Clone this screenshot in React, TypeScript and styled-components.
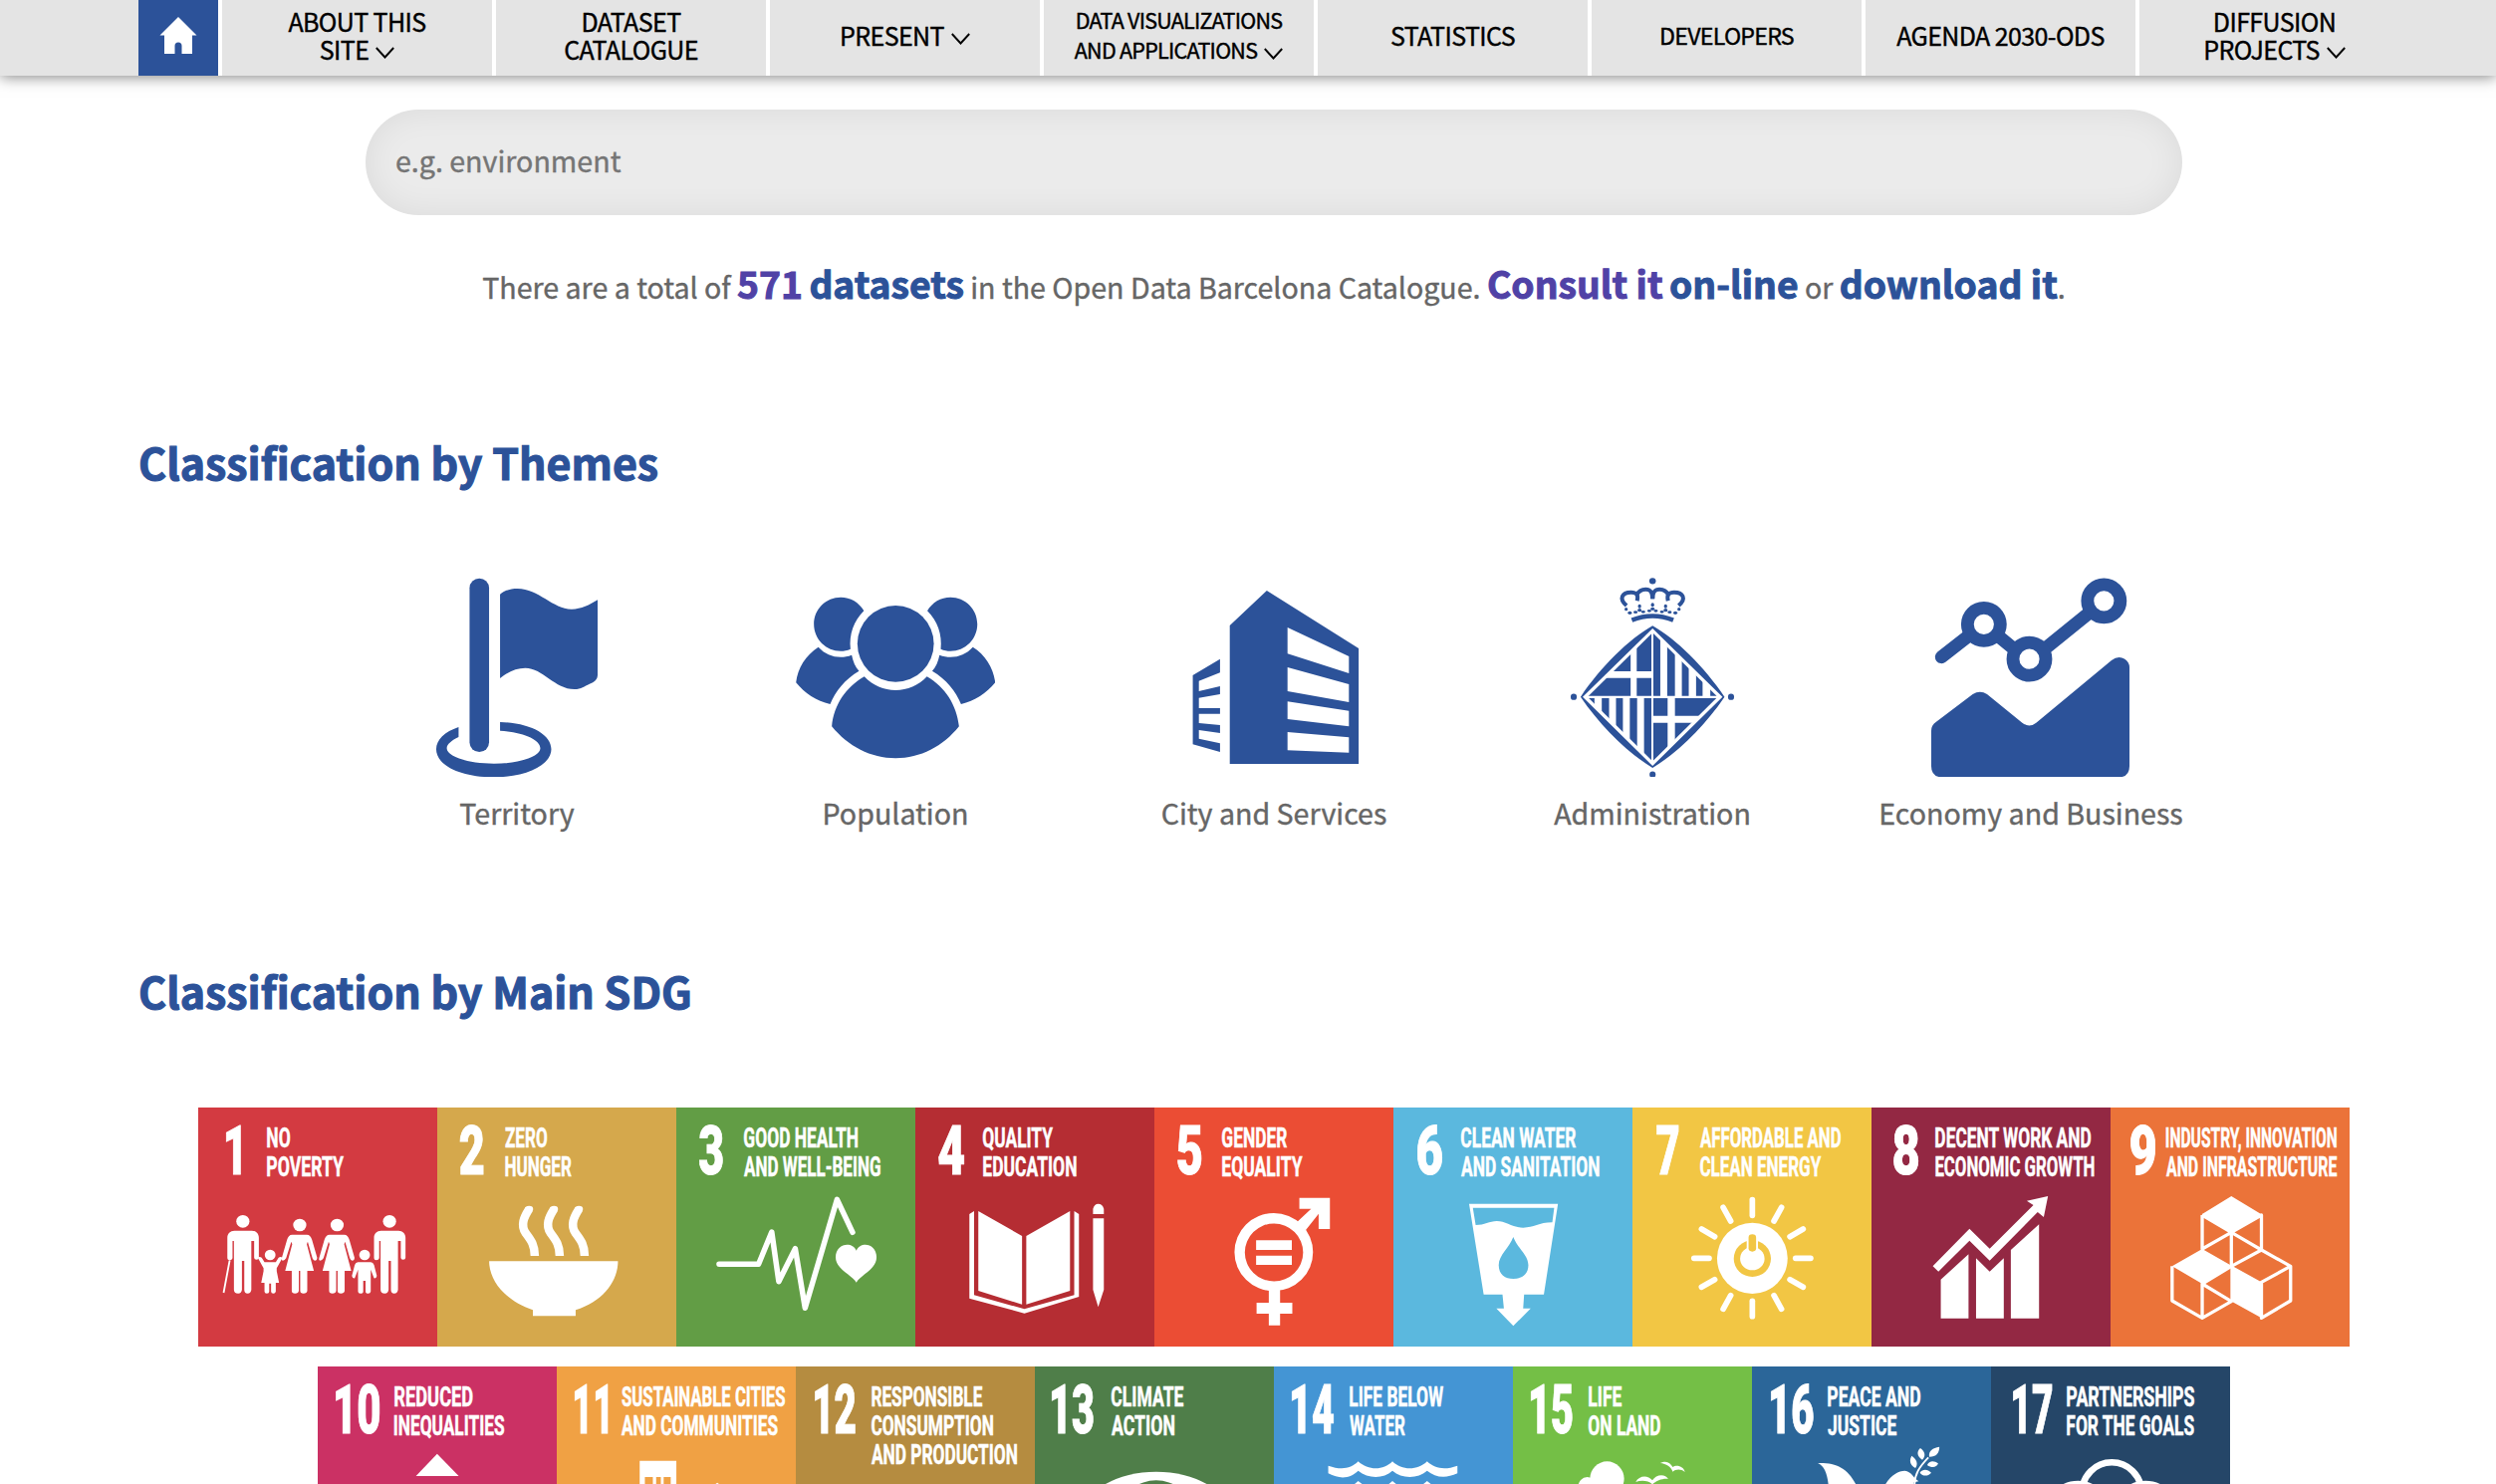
import React, { useLayoutEffect, useRef, useState } from "react";
import styled, { createGlobalStyle } from "styled-components";

const BLUE = "#2c5299";

const GlobalStyle = createGlobalStyle`
  *, *::before, *::after { box-sizing: border-box; }
  body {
    margin: 0;
    background: #fff;
    font-family: "Noto Sans CJK SC", "Noto Sans", sans-serif;
    color: #666;
    -webkit-text-stroke-width: 0.4px;
  }
`;

const Page = styled.div`
  height: 1490px;
  overflow: hidden;
`;

/* ---------- navigation ---------- */

const NavBar = styled.nav`
  position: relative;
  display: flex;
  height: 76px;
  padding-left: 139px;
  background: #e4e4e4;
  box-shadow: 0 1px 14px rgba(0, 0, 0, 0.5);
`;

const HomeLink = styled.a`
  display: flex;
  align-items: center;
  justify-content: center;
  width: 80px;
  padding-bottom: 4px;
  background: ${BLUE};
`;

const NavItem = styled.a<{ $size?: number; $line?: number; $track?: number }>`
  display: flex;
  flex-direction: column;
  align-items: center;
  justify-content: center;
  width: 275px;
  padding-bottom: 6px;
  border-left: 4px solid #fff;
  color: #000;
  font-size: ${(p) => p.$size ?? 25}px;
  line-height: ${(p) => p.$line ?? 28}px;
  letter-spacing: ${(p) => p.$track ?? -0.6}px;
  white-space: nowrap;
`;

const NavLine = styled.span`
  display: flex;
  align-items: center;
  gap: 7px;
`;

const ChevronSvg = styled.svg`
  width: 19px;
  height: 12px;
  margin-top: 7px;
`;

const Chevron = () => (
  <ChevronSvg viewBox="0 0 19 12">
    <path d="M0.8 1 L9.5 10.5 L18.2 1" fill="none" stroke="#000" strokeWidth="1.9" />
  </ChevronSvg>
);

type NavEntry = { lines: string[]; menu?: boolean; size?: number; line?: number; track?: number };

const NAV: NavEntry[] = [
  { lines: ["ABOUT THIS", "SITE"], menu: true },
  { lines: ["DATASET", "CATALOGUE"] },
  { lines: ["PRESENT"], menu: true },
  { lines: ["DATA VISUALIZATIONS", "AND APPLICATIONS"], menu: true, size: 21.5, line: 30, track: -0.75 },
  { lines: ["STATISTICS"] },
  { lines: ["DEVELOPERS"], size: 23.2, track: -0.75 },
  { lines: ["AGENDA 2030-ODS"] },
  { lines: ["DIFFUSION", "PROJECTS"], menu: true },
];

/* ---------- content ---------- */

const Content = styled.main`
  width: 2280px;
  margin-left: 139px;
  padding-top: 34px;
`;

const Centered = styled.div`
  width: 1824px;
  margin: 0 auto;
`;

const SearchBox = styled.div`
  display: flex;
  align-items: center;
  height: 106px;
  padding: 0 30px 5px;
  border-radius: 53px;
  background: #ebebeb;
  box-shadow: inset 0 0 34px rgba(0, 0, 0, 0.07);
  color: #757575;
  font-size: 28.6px;
`;

const Summary = styled.p`
  height: 48px;
  margin: 44px 0 0;
  font-size: 28.6px;
  line-height: 48px;
  text-align: center;
  white-space: nowrap;
`;

const Strong = styled.a<{ $visited?: boolean }>`
  color: ${(p) => (p.$visited ? "#5042a6" : BLUE)};
  font-size: 37.25px;
  font-weight: 700;
  -webkit-text-stroke-width: 1px;
`;

const Heading = styled.h2<{ $top: number }>`
  height: 60px;
  margin: ${(p) => p.$top}px 0 0;
  color: ${BLUE};
  font-size: 42.95px;
  font-weight: 700;
  line-height: 60px;
  white-space: nowrap;
  -webkit-text-stroke-width: 1.1px;
`;

const ThemeRow = styled.div`
  display: flex;
  gap: 76px;
  margin-top: 87px;
`;

const Theme = styled.a`
  display: flex;
  flex-direction: column;
  align-items: center;
  width: 304px;
  font-size: 28.6px;
  line-height: 40px;
  white-space: nowrap;
`;

const ThemeIcon = styled.svg`
  width: 200px;
  height: 200px;
  margin-bottom: 16px;
  fill: ${BLUE};
`;

/* ---------- theme icons ---------- */

const Territory = () => (
  <ThemeIcon viewBox="46.5 60 490 600" preserveAspectRatio="none">
    <rect x="175" y="62" width="48" height="523" rx="24" ry="29" />
    <path d="M250 110 C262 98 276 93 293 93 C345 93 380 155 426 155 C450 155 470 142 490 127 V352 C490 368 482 375 470 380 C457 387 450 396 433 396 C385 396 355 332 312 332 C290 332 270 343 250 363Z" />
    <path d="M148 510 C114 524 93 548 93 577 C93 624 150 661 235 661 C315 661 376 624 376 577 C376 532 325 498 250 495 V521 C306 526 349 547 349 574 C349 598 300 620 235 620 C170 620 119 598 119 574 C119 562 131 550 148 540Z" />
  </ThemeIcon>
);

const SidePerson = () => (
  <>
    <path d="M1145 160 C1133 134 1112 119 1088 119 C1052 119 1022 154 1022 200 C1022 245 1052 281 1088 281 C1096 281 1104 279 1112 275 C1108 232 1120 190 1145 160Z" />
    <path d="M1033 269 C1048 289 1067 299 1088 299 C1097 299 1106 297 1115 293 C1118 312 1124 329 1133 341 C1098 366 1075 402 1062 441 C1028 432 999 408 978 376 C982 332 1002 293 1033 269Z" />
  </>
);

const Population = () => (
  <ThemeIcon viewBox="977.5 60 490 600" preserveAspectRatio="none">
    <ellipse cx="1223" cy="259" rx="94" ry="115" />
    <path d="M1146 358 C1167 385 1194 399 1223 399 C1252 399 1279 385 1300 358 C1345 390 1373 443 1379 508 C1340 568 1284 604 1223 604 C1162 604 1106 568 1066 508 C1071 443 1101 390 1146 358Z" />
    <SidePerson />
    <g transform="translate(2446 0) scale(-1 1)">
      <SidePerson />
    </g>
  </ThemeIcon>
);

const City = () => (
  <ThemeIcon viewBox="95.5 60 490 600" preserveAspectRatio="none">
    <path
      fillRule="evenodd"
      d="M232 204 L323 99 L549 273 V621 H232Z M374 210 L525 297 V348 L374 289Z M374 330 L525 381 V435 L374 402Z M374 433 L525 461 V508 L374 486Z M374 525 L525 541 V587 L374 580Z"
    />
    <path d="M208 305 L141 354 V562 L208 585 V559 L156 545 V519 L208 528 V504 L156 498 V470 H208 V453 H156 V422 L208 411 V387 L156 402 V371 L208 346Z" />
  </ThemeIcon>
);

const CrownHalf = () => (
  <>
    <g fill="none" stroke={BLUE} strokeWidth="4">
      <path vectorEffect="non-scaling-stroke" d="M1208 144 C1188 124 1197 104 1219 104 C1231 104 1238 110 1234 130" />
      <path vectorEffect="non-scaling-stroke" d="M1233 112 C1238 99 1246 95 1255 95 C1266 95 1272 102 1272 124" />
    </g>
    <ellipse cx="1207" cy="155" rx="4" ry="5" />
    <ellipse cx="1216" cy="166" rx="5" ry="5" />
    <ellipse cx="1230" cy="164" rx="5" ry="4" />
    <ellipse cx="1240" cy="146" rx="4" ry="6" />
    <ellipse cx="1240" cy="158" rx="5" ry="5" />
    <ellipse cx="1249" cy="163" rx="5" ry="4" />
    <ellipse cx="1264" cy="160" rx="5" ry="4" />
  </>
);

const Administration = () => (
  <ThemeIcon viewBox="1026.5 60 490 600" preserveAspectRatio="none">
    <clipPath id="lozenge">
      <path d="M1272 226 L1432 419 L1272 613 L1112 419Z" />
    </clipPath>
    <ellipse cx="1272" cy="70" rx="8" ry="9.5" />
    <ellipse cx="1272" cy="653" rx="7.5" ry="9.5" />
    <ellipse cx="1078" cy="419" rx="7.5" ry="9.5" />
    <ellipse cx="1465" cy="419" rx="7.5" ry="9.5" />
    <path
      fillRule="evenodd"
      d="M1272 205 C1330 245 1400 330 1449 419 C1400 508 1330 590 1272 633 C1214 590 1144 508 1095 419 C1144 330 1214 245 1272 205Z M1272 213 L1444 419 L1272 627 L1100 419Z"
    />
    <g clipPath="url(#lozenge)">
      <path d="M1100 200 H1218 V342 H1100Z M1233 200 H1269 V342 H1233Z M1100 362 H1218 V416 H1100Z M1233 362 H1269 V416 H1233Z" />
      <path d="M1274 200 H1291 V416 H1274Z M1308 200 H1327 V416 H1308Z M1344 200 H1361 V416 H1344Z M1379 200 H1395 V416 H1379Z M1414 200 H1430 V416 H1414Z" />
      <path d="M1114 423 H1129 V640 H1114Z M1147 423 H1165 V640 H1147Z M1182 423 H1199 V640 H1182Z M1216 423 H1234 V640 H1216Z M1251 423 H1269 V640 H1251Z" />
      <path d="M1274 423 H1309 V476 H1274Z M1327 423 H1440 V476 H1327Z M1274 497 H1309 V640 H1274Z M1327 497 H1440 V640 H1327Z" />
    </g>
    <CrownHalf />
    <g transform="translate(2544 0) scale(-1 1)">
      <CrownHalf />
    </g>
    <ellipse cx="1272" cy="142" rx="4" ry="6" />
    <ellipse cx="1272" cy="154" rx="5" ry="5" />
    <path d="M1221 188 Q1272 163 1323 188" fill="none" stroke={BLUE} strokeWidth="4.4" vectorEffect="non-scaling-stroke" />
  </ThemeIcon>
);

const Economy = () => (
  <ThemeIcon viewBox="237 60 600 600">
    <path d="M268 299 L395 200 L532 312 L757 130" fill="none" stroke={BLUE} strokeWidth="39" strokeLinecap="round" />
    <g fill="#fff" stroke={BLUE} strokeWidth="38.5">
      <circle cx="395.5" cy="200.5" r="49.5" />
      <circle cx="532.5" cy="305" r="49.5" />
      <circle cx="757" cy="130" r="49.5" />
    </g>
    <path d="M237 521 Q237 504 252 494 L362 411 Q384 398 405 411 L511 497 Q532 514 553 497 L780 309 Q800 293 820 305 Q834 315 834 330 V628 Q834 661 802 661 H270 Q237 661 237 628Z" />
  </ThemeIcon>
);

const THEMES = [
  { label: "Territory", Icon: Territory },
  { label: "Population", Icon: Population },
  { label: "City and Services", Icon: City },
  { label: "Administration", Icon: Administration },
  { label: "Economy and Business", Icon: Economy },
];

/* ---------- goal tiles ---------- */

const GoalRow = styled.div<{ $top: number }>`
  display: flex;
  justify-content: center;
  margin-top: ${(p) => p.$top}px;
`;

const Tile = styled.a<{ $color: string }>`
  display: flex;
  flex-direction: column;
  width: 240px;
  height: 240px;
  background: ${(p) => p.$color};
  color: #fff;
  font-family: Roboto, sans-serif;
`;

const TileHead = styled.div<{ $indent: number }>`
  display: flex;
  flex: none;
  height: 80px;
  padding-left: ${(p) => p.$indent}px;
`;

const TileNumber = styled.div<{ $width: number }>`
  flex: none;
  width: ${(p) => p.$width}px;
  padding-top: 10px;
  font-size: 68.5px;
  font-weight: 900;
  line-height: 68px;
  -webkit-text-stroke-width: 1px;
`;

const TileTitle = styled.div`
  flex: none;
  padding-top: 15.5px;
  font-size: 27.7px;
  font-weight: 700;
  line-height: 29px;
  -webkit-text-stroke-width: 0.5px;
`;

const FittedLine = styled.span`
  display: block;
  width: max-content;
  white-space: nowrap;
  transform-origin: left center;
`;

const Art = styled.svg`
  flex: none;
  width: 240px;
  height: 160px;
  fill: #fff;
`;

/* Condenses a line so that its drawn glyphs span exactly `width` pixels. */
function Condensed({ text, width }: { text: string; width: number }) {
  const ref = useRef<HTMLSpanElement>(null);
  const [fit, setFit] = useState({ k: 0.6, shift: 0 });
  useLayoutEffect(() => {
    const el = ref.current;
    const ctx = document.createElement("canvas").getContext("2d");
    if (!el || !ctx) return;
    const cs = getComputedStyle(el);
    ctx.font = `${cs.fontWeight} ${cs.fontSize} ${cs.fontFamily}`;
    const m = ctx.measureText(text);
    const k = width / (m.actualBoundingBoxLeft + m.actualBoundingBoxRight);
    setFit({ k, shift: m.actualBoundingBoxLeft * k });
  }, [text, width]);
  return (
    <FittedLine ref={ref} style={{ transform: `translateX(${fit.shift}px) scaleX(${fit.k})` }}>
      {text}
    </FittedLine>
  );
}

type Goal = {
  n: string;
  color: string;
  /* left edge and width of the numeral, left edge of the title */
  nx: number;
  nw: number;
  tx: number;
  lines: [string, number][];
  box: string;
  art: React.ReactNode;
};

const Man = () => (
  <>
    <ellipse cx="114" cy="379" rx="14" ry="19" />
    <path d="M96 407 H133 C142 407 148 416 148 428 V488 Q148 494 143 494 Q138 494 138 488 V438 H132 V585 Q131 596 124 596 Q117 596 117 585 V498 H112 V585 Q111 596 104 596 Q95 596 95 585 V438 H92 V490 Q91 496 86 496 Q81 496 81 490 V428 C81 416 87 407 96 407Z" />
  </>
);

const Woman = () => (
  <>
    <ellipse cx="235" cy="390" rx="14" ry="19" />
    <path d="M219 419 H250 C256 419 259 425 261 434 L272 488 Q272 497 267 497 Q264 497 262 490 L252 440 L250 448 L265 528 H251 V588 Q250 596 243 596 Q236 596 236 588 V528 H233 V588 Q232 596 225 596 Q218 596 218 588 V528 H204 L219 448 L217 440 L206 490 Q203 497 199 497 Q195 497 197 488 L208 434 C210 425 213 419 219 419Z" />
  </>
);

const Steam = () => (
  <>
    <ellipse cx="723" cy="342" rx="8.5" ry="9.5" />
    <path
      d="M723 342 C712 366 704 390 716 415 C727 436 735 450 735 483"
      fill="none"
      stroke="#fff"
      strokeWidth="8.5"
      vectorEffect="non-scaling-stroke"
    />
  </>
);

const WAVE =
  "M768 335 C800 348 825 345 844 322 C870 350 908 350 931 322 C955 350 995 350 1019 322 C1040 345 1065 348 1096 335 V358 C1065 375 1040 370 1019 350 C995 375 955 375 931 350 C908 375 870 375 844 350 C825 372 800 378 768 358Z";

const GOALS: Goal[] = [
  {
    n: "1", color: "#d33a41", nx: 27.5, nw: 14.5, tx: 68.5, box: "19 276 508.5 480",
    lines: [["NO", 23], ["POVERTY", 77.5]],
    art: (
      <>
        <Man />
        <g transform="translate(312 0)"><Man /></g>
        <path d="M86 496 L73 594" stroke="#fff" strokeWidth="1.8" vectorEffect="non-scaling-stroke" />
        <Woman />
        <g transform="translate(79.5 0)"><Woman /></g>
        <ellipse cx="172" cy="480" rx="11.5" ry="16" />
        <path d="M160 502 H184 L190 488 Q195 483 198 489 L186 520 V529 L191 564 H184 V590 Q183 596 179 596 Q174 596 174 590 V566 H170 V590 Q170 596 165 596 Q160 596 160 590 V564 H153 L158 529 V520 L146 489 Q149 483 154 488Z" />
        <ellipse cx="373" cy="480" rx="11.5" ry="16" />
        <path d="M359 502 H386 Q391 502 393 510 L399 543 Q398 552 393 550 L386 524 V590 Q385 596 381 596 Q375 596 375 590 V558 H370 V590 Q370 596 364 596 Q359 596 359 590 V524 L352 550 Q347 552 346 543 L352 510 Q354 502 359 502Z" />
      </>
    ),
  },
  {
    n: "2", color: "#d5a84c", nx: 23, nw: 23, tx: 68, box: "527.6 276 508.5 480",
    lines: [["ZERO", 42], ["HUNGER", 67]],
    art: (
      <>
        <path d="M638 499 H912 C912 560 880 620 822 646 V664 H731 V646 C675 620 638 560 638 499Z" />
        <Steam />
        <g transform="translate(53 0)"><Steam /></g>
        <g transform="translate(106 0)"><Steam /></g>
      </>
    ),
  },
  {
    n: "3", color: "#629d45", nx: 23, nw: 23.5, tx: 68, box: "1036 276 508.5 480",
    lines: [["GOOD HEALTH", 114], ["AND WELL-BEING", 137]],
    art: (
      <>
        <path
          d="M1127 508 H1211 L1239 411 L1254 560 L1289 461 L1310 640 L1378 313 L1411 412"
          fill="none" stroke="#fff" strokeWidth="5.5" strokeLinecap="round" strokeLinejoin="round"
          vectorEffect="non-scaling-stroke"
        />
        <path d="M1419 563 C1410 540 1375 524 1375 487 C1375 445 1410 437 1419 467 C1428 437 1462 445 1462 487 C1462 524 1428 540 1419 563Z" />
      </>
    ),
  },
  {
    n: "4", color: "#b52d33", nx: 23, nw: 26, tx: 68, box: "19 276 508.5 480",
    lines: [["QUALITY", 70.5], ["EDUCATION", 93.5]],
    art: (
      <>
        <path d="M153 348 L246 423 V629 L153 588Z M348 348 L255 423 V629 L348 588Z" />
        <path d="M134 357 L144 348 V601 L251 643 L357 601 V348 L367 357 V606 L251 656 L134 611Z" />
        <path d="M397 357 V341 Q400 326 408 326 Q417 326 420 341 V357Z M397 370 H420 V585 L408 637 L397 585Z" />
      </>
    ),
  },
  {
    n: "5", color: "#eb4d34", nx: 23, nw: 24, tx: 68, box: "527.6 276 508.5 480",
    lines: [["GENDER", 65.5], ["EQUALITY", 81]],
    art: (
      <>
        <path
          fillRule="evenodd"
          d="M698 471.5 a83.5 117.5 0 1 0 167 0 a83.5 117.5 0 1 0 -167 0Z M720 472.5 a62 87 0 1 0 124 0 a62 87 0 1 0 -124 0Z"
        />
        <path d="M771 580 H795 V624 H821 V657 H795 V692 H771 V657 H745 V624 H771Z" />
        <path d="M836 308 H901 V402 H877 V356 L848 408 L831 381 L861 341 H836Z" />
        <path d="M744 436 H820 V465 H744Z M744 482 H820 V510 H744Z" />
      </>
    ),
  },
  {
    n: "6", color: "#5bb8de", nx: 23.5, nw: 25, tx: 68, box: "1036 276 508.5 480",
    lines: [["CLEAN WATER", 115.5], ["AND SANITATION", 138.5]],
    art: (
      <path
        fillRule="evenodd"
        d="M1197 326 H1386 L1356 599 H1314 L1312 641 H1328 L1291 694 L1255 641 H1271 L1268 599 H1228Z M1205 338 H1378 L1374 382 C1345 382 1335 398 1312 398 C1290 398 1275 378 1256 378 C1240 378 1230 390 1211 390Z M1291 426 C1300 460 1323 480 1323 511 C1323 540 1308 552 1291 552 C1274 552 1260 540 1260 511 C1260 480 1282 460 1291 426Z"
      />
    ),
  },
  {
    n: "7", color: "#f2c644", nx: 24, nw: 22, tx: 68, box: "19 276 508.5 480",
    lines: [["AFFORDABLE AND", 141], ["CLEAN  ENERGY", 126]],
    art: (
      <>
        <ellipse cx="274" cy="490" rx="75" ry="107" />
        <ellipse cx="274" cy="491" rx="39.5" ry="55" fill="#f2c644" />
        <ellipse cx="274" cy="491" rx="26" ry="35" />
        <rect x="262" y="425" width="24" height="45" />
        <rect x="266" y="418" width="16" height="52" rx="8" ry="10" fill="#f2c644" />
        <g stroke="#fff" strokeWidth="5.7" strokeLinecap="round">
          {[
            "M274 314 V361", "M212 337 L228 378", "M336 337 L320 378", "M166 402 L194 425", "M382 402 L354 425",
            "M150 490 H182", "M366 490 H398", "M166 577 L194 554", "M382 577 L354 554", "M212 643 L228 602",
            "M336 643 L320 602", "M274 619 V665",
          ].map((d) => (
            <path key={d} d={d} vectorEffect="non-scaling-stroke" />
          ))}
        </g>
      </>
    ),
  },
  {
    n: "8", color: "#932843", nx: 22, nw: 25, tx: 64, box: "527.6 276 508.5 480",
    lines: [["DECENT WORK AND", 156.5], ["ECONOMIC GROWTH", 159.5]],
    art: (
      <>
        <path d="M675 554 L734 478 V671 H675Z M750 490 L779 530 L809 490 V671 H750Z M824 465 L884 388 V671 H824Z" />
        <path d="M658 514 L736 401 L779 461 L872 330 L858 317 L903 303 L894 366 L881 351 L779 497 L736 437 L670 530Z" />
      </>
    ),
  },
  {
    n: "9", color: "#eb7339", nx: 19.5, nw: 25, tx: 56, box: "1036 276 508.5 480",
    lines: [["INDUSTRY, INNOVATION", 171], ["AND INFRASTRUCTURE", 171]],
    art: (
      <>
        <path d="M1293 303 L1357 358 L1293 410 L1230 358Z M1231 462 L1295 514 L1231 567 L1167 514Z M1291 510 L1357 562 V670 L1291 618Z" />
        <g fill="none" stroke="#fff" strokeWidth="3.3" strokeLinejoin="round">
          <path vectorEffect="non-scaling-stroke" d="M1231 360 V462 L1293 412 L1357 465 V360 L1293 412 V514 M1293 412 L1231 360" />
          <path vectorEffect="non-scaling-stroke" d="M1167 514 V618 L1231 670 L1293 620 L1231 567 V670 M1231 567 L1293 514" />
          <path vectorEffect="non-scaling-stroke" d="M1293 514 L1357 465 L1419 514 V618 L1357 670 V562 L1419 514" />
        </g>
      </>
    ),
  },
  {
    n: "10", color: "#cb3164", nx: 17.5, nw: 44, tx: 76.5, box: "19 276 508.5 480",
    lines: [["REDUCED", 78.5], ["INEQUALITIES", 110.5]],
    art: <path d="M273 299 L319 366 H228Z" />,
  },
  {
    n: "11", color: "#f0a144", nx: 17.5, nw: 33, tx: 65, box: "527.6 276 508.5 480",
    lines: [["SUSTAINABLE CITIES", 164.5], ["AND COMMUNITIES", 157]],
    art: (
      <>
        <path fillRule="evenodd" d="M704 320 H782 V756 H704Z M715 369 H732 V400 H715Z M739 369 H749 V400 H739Z M755 369 H770 V400 H755Z" />
        <path d="M869 386 L900 420 H838Z" />
      </>
    ),
  },
  {
    n: "12", color: "#b58c40", nx: 18.5, nw: 40.5, tx: 76, box: "19 276 508.5 480",
    lines: [["RESPONSIBLE", 111], ["CONSUMPTION", 122], ["AND PRODUCTION", 146]],
    art: null,
  },
  {
    n: "13", color: "#4f7e49", nx: 16.5, nw: 41.5, tx: 76.5, box: "23 276 607 480",
    lines: [["CLIMATE", 72], ["ACTION", 63]],
    art: (
      <>
        <ellipse cx="331" cy="480" rx="182" ry="127" />
        <ellipse cx="331" cy="461" rx="85" ry="82" fill="#4f7e49" />
      </>
    ),
  },
  {
    n: "14", color: "#4495d4", nx: 17.5, nw: 42, tx: 76, box: "630 276 607 480",
    lines: [["LIFE BELOW", 94], ["WATER", 56]],
    art: (
      <>
        <path d={WAVE} />
        <path transform="translate(0 59)" d={WAVE} />
      </>
    ),
  },
  {
    n: "15", color: "#74bf46", nx: 17.5, nw: 41.5, tx: 76, box: "-272 276 588 480",
    lines: [["LIFE", 33], ["ON LAND", 72]],
    art: (
      <>
        <ellipse cx="-40.5" cy="374" rx="42" ry="52" />
        <ellipse cx="-89" cy="400" rx="23" ry="31" />
        <path d="M90 327 C105 318 115 325 121 339 C131 330 149 338 151 354 C140 343 128 346 121 353 C118 340 105 328 90 327Z" />
        <path d="M30 384 C38 364 60 362 71 379 C80 359 104 359 110 375 C98 372 80 380 71 391 C62 380 45 377 30 384Z" />
      </>
    ),
  },
  {
    n: "16", color: "#2b6699", nx: 18.5, nw: 42.5, tx: 76, box: "316 276 588 480",
    lines: [["PEACE AND", 93], ["JUSTICE", 69]],
    art: (
      <>
        <path d="M478 327 C530 325 560 348 582 420 H505 C505 375 498 337 478 327Z" />
        <path d="M640 400 C655 365 675 350 692 350 C708 352 712 370 726 382 L714 385 V400Z" />
        <path
          d="M716 392 C716 360 728 338 750 310"
          fill="none" stroke="#fff" strokeWidth="1.8" vectorEffect="non-scaling-stroke"
        />
        <path d="M752 308 C750 290 760 281 777 278 C777 296 770 308 752 308Z" />
        <path d="M735 317 C721 306 721 292 730 282 C742 292 744 306 735 317Z" />
        <path d="M718 342 C703 332 703 316 709 305 C722 316 725 330 718 342Z" />
        <path d="M747 333 C752 319 764 319 774 328 C770 341 758 343 747 333Z" />
        <path d="M729 356 C736 344 748 345 757 356 C748 368 736 367 729 356Z" />
      </>
    ),
  },
  {
    n: "17", color: "#254668", nx: 21.5, nw: 39, tx: 76, box: "904 276 588 480",
    lines: [["PARTNERSHIPS", 128.5], ["FOR THE GOALS", 128.5]],
    art: (
      <g fill="none" stroke="#fff" strokeWidth="6.5">
        <ellipse cx="1201" cy="415" rx="73" ry="90" vectorEffect="non-scaling-stroke" />
        <ellipse cx="1118" cy="478" rx="73" ry="88" vectorEffect="non-scaling-stroke" />
        <ellipse cx="1284" cy="478" rx="73" ry="88" vectorEffect="non-scaling-stroke" />
      </g>
    ),
  },
];

const GoalTile = ({ goal }: { goal: Goal }) => (
  <Tile $color={goal.color}>
    <TileHead $indent={goal.nx}>
      <TileNumber $width={goal.tx - goal.nx}>
        <Condensed text={goal.n} width={goal.nw} />
      </TileNumber>
      <TileTitle>
        {goal.lines.map(([text, width]) => (
          <Condensed key={text} text={text} width={width} />
        ))}
      </TileTitle>
    </TileHead>
    <Art viewBox={goal.box} preserveAspectRatio="none">{goal.art}</Art>
  </Tile>
);

export default function App() {
  return (
    <Page>
      <GlobalStyle />
      <NavBar>
        <HomeLink>
          <svg width="38" height="38" viewBox="0 0 38 38" fill="#fff">
            <path d="M19 0 L37.5 18.5 H33 V37 H22.5 V29 Q22.5 25.5 19 25.5 Q15.5 25.5 15.5 29 V37 H5 V18.5 H0.5Z" />
          </svg>
        </HomeLink>
        {NAV.map((item) => (
          <NavItem key={item.lines[0]} $size={item.size} $line={item.line} $track={item.track}>
            {item.lines.map((line, i) => (
              <NavLine key={line}>
                {line}
                {item.menu && i === item.lines.length - 1 && <Chevron />}
              </NavLine>
            ))}
          </NavItem>
        ))}
      </NavBar>
      <Content>
        <Centered>
          <SearchBox role="searchbox">e.g. environment</SearchBox>
          <Summary>
            There are a total of <Strong $visited>571</Strong> <Strong>datasets</Strong> in the Open Data Barcelona
            Catalogue. <Strong $visited>Consult it</Strong> <Strong>on-line</Strong> or <Strong>download it</Strong>.
          </Summary>
        </Centered>
        <Heading $top={125}>Classification by Themes</Heading>
        <Centered>
          <ThemeRow>
            {THEMES.map(({ label, Icon }) => (
              <Theme key={label}>
                <Icon />
                {label}
              </Theme>
            ))}
          </ThemeRow>
        </Centered>
        <Heading $top={128}>Classification by Main SDG</Heading>
        <GoalRow $top={88}>
          {GOALS.slice(0, 9).map((goal) => (
            <GoalTile key={goal.n} goal={goal} />
          ))}
        </GoalRow>
        <GoalRow $top={20}>
          {GOALS.slice(9).map((goal) => (
            <GoalTile key={goal.n} goal={goal} />
          ))}
        </GoalRow>
      </Content>
    </Page>
  );
}
